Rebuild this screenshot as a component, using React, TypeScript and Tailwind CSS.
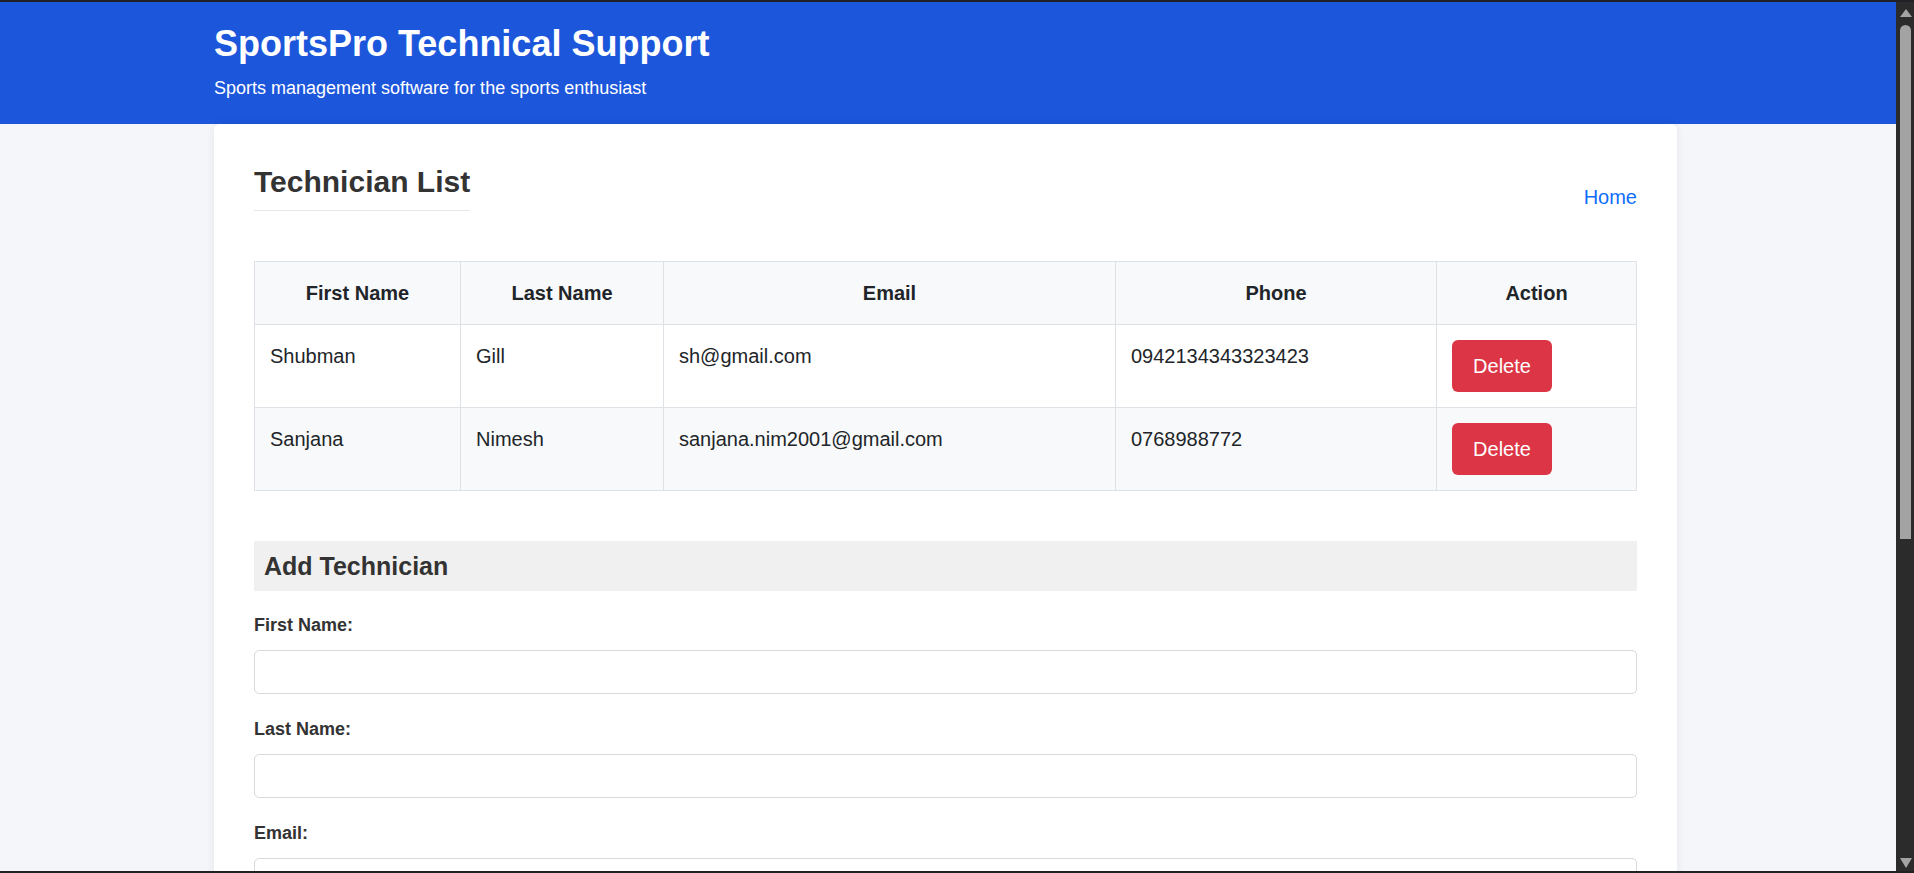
import React from "react";

const rows = [
  { first: "Shubman", last: "Gill", email: "sh@gmail.com", phone: "0942134343323423" },
  { first: "Sanjana", last: "Nimesh", email: "sanjana.nim2001@gmail.com", phone: "0768988772" },
];

function Field({ label, first }: { label: string; first?: boolean }) {
  return (
    <div className={first ? "mt-[21px]" : "mt-[22px]"}>
      <label className="block text-[18px] leading-[27px] font-bold text-[#333]">{label}</label>
      <input
        type="text"
        className="mt-[11px] block w-full h-[44px] border border-[#d9d9d9] rounded-[5px] bg-white px-[12px] outline-none"
      />
    </div>
  );
}

export default function App() {
  return (
    <div
      className="h-screen w-full flex flex-col overflow-hidden bg-[#202124]"
      style={{ fontFamily: '"Liberation Sans", Arial, sans-serif' }}
    >
      <div className="h-[2px] bg-[#202124] shrink-0" />
      <div className="flex flex-1 min-h-0">
        <div className="flex-1 min-w-0 overflow-hidden bg-[#f5f6fa]">
          <header className="bg-[#1c56db] h-[122px]">
            <div className="ml-[214px] w-[1463px] pt-[22px]">
              <h1 className="text-[36px] leading-[40px] font-bold text-white">SportsPro Technical Support</h1>
              <p className="mt-[11px] text-[18px] leading-[27px] text-white">
                Sports management software for the sports enthusiast
              </p>
            </div>
          </header>
          <main className="ml-[214px] w-[1463px] bg-white rounded-t-[6px] shadow-[0_0_10px_rgba(0,0,0,0.07)] px-[40px] pt-[40px] pb-[40px]">
            <div className="flex justify-between items-end">
              <h2 className="inline-block text-[30px] leading-[36px] font-bold text-[#333] pb-[10px] border-b border-[#e5e7eb]">
                Technician List
              </h2>
              <a href="#" className="text-[20px] leading-[30px] text-[#0d6efd] mb-[-1px]">
                Home
              </a>
            </div>

            <table className="mt-[50px] w-full border-collapse table-fixed text-[#212529] text-[20px] leading-[30px]">
              <colgroup>
                <col className="w-[206px]" />
                <col className="w-[203px]" />
                <col className="w-[452px]" />
                <col className="w-[321px]" />
                <col />
              </colgroup>
              <thead>
                <tr className="bg-[#f8f9fa]">
                  {["First Name", "Last Name", "Email", "Phone", "Action"].map((h) => (
                    <th
                      key={h}
                      className="border border-[#dee2e6] px-[15px] pt-[16px] pb-[16px] font-bold text-center"
                    >
                      {h}
                    </th>
                  ))}
                </tr>
              </thead>
              <tbody>
                {rows.map((r, i) => (
                  <tr key={r.email} className={i % 2 === 1 ? "bg-[#f8f9fa]" : "bg-white"}>
                    <td className="border border-[#dee2e6] px-[15px] pt-[16px] pb-[14px] align-top">{r.first}</td>
                    <td className="border border-[#dee2e6] px-[15px] pt-[16px] pb-[14px] align-top">{r.last}</td>
                    <td className="border border-[#dee2e6] px-[15px] pt-[16px] pb-[14px] align-top">{r.email}</td>
                    <td className="border border-[#dee2e6] px-[15px] pt-[16px] pb-[14px] align-top">{r.phone}</td>
                    <td className="border border-[#dee2e6] px-[15px] pt-[15px] pb-[15px] align-top">
                      <button className="block w-[100px] h-[52px] rounded-[6px] bg-[#dc3545] text-white text-[20px] leading-[30px]">
                        Delete
                      </button>
                    </td>
                  </tr>
                ))}
              </tbody>
            </table>

            <section className="mt-[50px]">
              <h3 className="bg-[#f0f0f0] px-[10px] py-[10px] text-[25px] leading-[30px] font-bold text-[#333]">
                Add Technician
              </h3>
              <Field label="First Name:" first />
              <Field label="Last Name:" />
              <Field label="Email:" />
            </section>
          </main>
        </div>
        <div className="w-[18px] shrink-0 bg-[#2b2b2b] flex flex-col items-center">
          <svg width="12" height="8" viewBox="0 0 12 8" className="mt-[7px] ml-[1px]">
            <polygon points="6,0 12,8 0,8" fill="#a3a3a3" />
          </svg>
          <div className="mt-[8px] ml-[1px] w-[11px] h-[514px] bg-[#a3a3a3] rounded-t-full" />
          <div className="flex-1" />
          <svg width="12" height="10" viewBox="0 0 12 10" className="mb-[3px] ml-[1px]">
            <polygon points="0,0 12,0 6,10" fill="#a3a3a3" />
          </svg>
        </div>
      </div>
      <div className="h-[2px] bg-[#202124] shrink-0" />
    </div>
  );
}
